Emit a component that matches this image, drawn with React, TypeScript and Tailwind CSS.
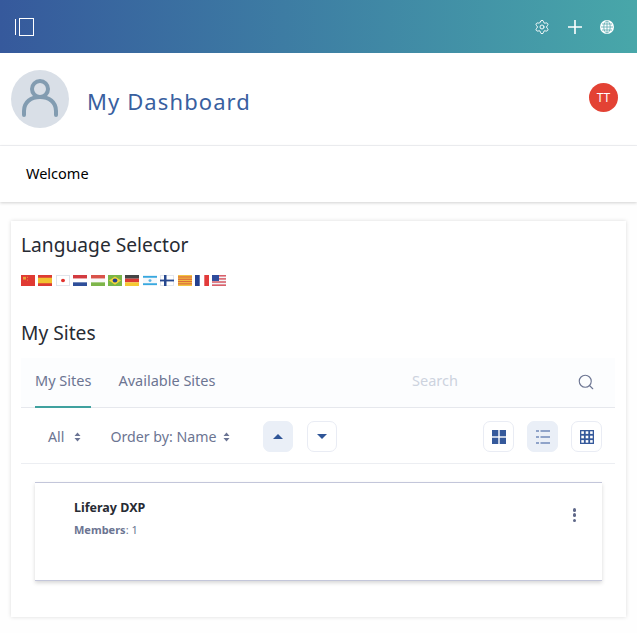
import React from "react";
import { Settings, Search } from "lucide-react";

const Flag = ({ children }: { children: React.ReactNode }) => (
  <svg width="14" height="11" viewBox="0 0 14 12" preserveAspectRatio="none" className="block shrink-0">
    {children}
  </svg>
);

const flags = [
  <><rect width="14" height="12" fill="#e03a33" /><rect x="2" y="2" width="3" height="3" fill="#e8a33a" /><rect x="6" y="2" width="1" height="1" fill="#e8a33a" /><rect x="6" y="5" width="1" height="1" fill="#e8a33a" /></>,
  <><rect width="14" height="12" fill="#dd3b33" /><rect y="3" width="14" height="6" fill="#f2c230" /></>,
  <><rect width="14" height="12" fill="#f4f5f8" /><rect x="0.5" y="0.5" width="13" height="11" fill="#fff" stroke="#dfe3ea" /><circle cx="7" cy="6" r="2" fill="#e2322e" /></>,
  <><rect width="14" height="4" fill="#d33b3f" /><rect y="4" width="14" height="4" fill="#fff" /><rect y="8" width="14" height="4" fill="#2f4f9a" /></>,
  <><rect width="14" height="4" fill="#d9534a" /><rect y="4" width="14" height="4" fill="#f8f8f8" /><rect y="8" width="14" height="4" fill="#7db54a" /></>,
  <><rect width="14" height="12" fill="#7ab648" /><path d="M7 1.500 13 6 7 10.500 1 6Z" fill="#f5d33a" /><circle cx="7" cy="6" r="2.300" fill="#23408f" /></>,
  <><rect width="14" height="4" fill="#444" /><rect y="4" width="14" height="4" fill="#dc3a33" /><rect y="8" width="14" height="4" fill="#f5c932" /></>,
  <><rect width="14" height="12" fill="#f6f8fb" /><rect y="1" width="14" height="2" fill="#38a8df" /><rect y="9" width="14" height="2" fill="#38a8df" /><circle cx="7" cy="6" r="1.500" fill="#5ab4e2" /></>,
  <><rect width="14" height="12" fill="#f0f2f7" /><rect x=".5" y=".5" width="13" height="11" fill="#fff" stroke="#e2e6ee" /><rect x="4" width="2.500" height="12" fill="#27488f" /><rect y="5" width="14" height="2" fill="#27488f" /></>,
  <><rect width="14" height="12" fill="#f3c442" /><rect y="1.500" width="14" height="1.300" fill="#dc6a3c" /><rect y="4" width="14" height="1.300" fill="#dc6a3c" /><rect y="6.500" width="14" height="1.300" fill="#dc6a3c" /><rect y="9" width="14" height="1.300" fill="#dc6a3c" /></>,
  <><rect width="14" height="12" fill="#fff" /><rect width="4.700" height="12" fill="#23408f" /><rect x="9.300" width="4.700" height="12" fill="#e23b3b" /></>,
  <><rect width="14" height="12" fill="#f3f4f7" /><rect y="0" width="14" height="1.700" fill="#d9606a" /><rect y="3.400" width="14" height="1.700" fill="#d9606a" /><rect y="6.800" width="14" height="1.700" fill="#d9606a" /><rect y="10.200" width="14" height="1.800" fill="#d9606a" /><rect width="7" height="6.500" fill="#2f4c9c" /></>,
];

const Updown = () => (
  <svg width="7" height="10" viewBox="0 0 7 10" className="block">
    <path d="M3.500 0.500 6.500 4H.5Z M3.500 9.500 .5 6h6Z" fill="#6b7494" />
  </svg>
);

const IconBtn = ({ active, children, wide }: { active?: boolean; children: React.ReactNode; wide?: boolean }) => (
  <div className={`flex h-[31px] ${wide ? "w-[31px]" : "w-[30px]"} items-center justify-center rounded-[7px] border ${active ? "border-[#eaeff7] bg-[#eaeff7]" : "border-[#e9ecf4] bg-white"}`}>
    {children}
  </div>
);

const Cell = ({ x, y }: { x: number; y: number }) => <rect x={x} y={y} width="2.600" height="2.600" fill="#fff" />;

export default function App() {
  return (
    <div className="h-[633px] w-[637px] overflow-hidden bg-[#fefefe] font-['Noto_Sans','Open_Sans',sans-serif]">
      <header className="flex h-[53px] items-center bg-gradient-to-r from-[#36599c] to-[#48a7a9] pl-[15px] pr-[23px] text-white">
        <svg width="19" height="18" viewBox="0 0 19 18" fill="none" stroke="#fff" strokeWidth="1">
          <path d="M.5 1v16" />
          <rect x="4.500" y=".5" width="14" height="17" />
        </svg>
        <div className="ml-auto flex items-center gap-[18px]">
          <Settings size={16} strokeWidth={1.400} />
          <svg width="14" height="14" viewBox="0 0 14 14" stroke="#fff" strokeWidth="1.600" fill="none">
            <path d="M0 7h14M7 0v14" />
          </svg>
          <svg width="14" height="14" viewBox="0 0 14 14" fill="none">
            <circle cx="7" cy="7" r="7" fill="#fff" />
            <ellipse cx="7" cy="7" rx="3.200" ry="6" stroke="#5aa9b0" strokeWidth=".8" />
            <path d="M1 7h12M7 1v12M2 4h10M2 10h10" stroke="#5aa9b0" strokeWidth=".8" />
          </svg>
        </div>
      </header>

      <div className="flex h-[93px] items-center border-b border-[#f1f2f5] bg-white pl-[11px] pr-[19px]">
        <div className="flex h-[58px] w-[58px] items-center justify-center rounded-full bg-[#d9dfe7]">
          <svg width="36" height="40" viewBox="0 0 36 40" fill="none" stroke="#829cb1" strokeWidth="4" strokeLinecap="round">
            <circle cx="18" cy="10" r="8" />
            <path d="M2 36v-4c0-9 7-14 16-14s16 5 16 14v4" />
          </svg>
        </div>
        <h1 className="ml-[18px] mt-[5px] text-[22px] tracking-[1.100px] text-[#39609f]">My Dashboard</h1>
        <div className="ml-auto mb-[3px] flex h-[29px] w-[29px] items-center justify-center rounded-full bg-[#e34234] text-[12px] text-white">TT</div>
      </div>

      <nav className="flex h-[56px] items-center bg-white pl-[26px] text-[14.500px] text-black shadow-[0_1px_3px_rgba(0,0,0,0.18)]">Welcome</nav>

      <main className="mx-[11px] mt-[19px] h-[396px] bg-white pl-[10px] pr-[11px] pt-[11px] shadow-[0_0_4px_rgba(0,0,0,0.14)]">
        <h2 className="text-[19.200px] leading-[26px] text-[#272b33]">Language Selector</h2>
        <div className="mt-[17px] flex gap-[3.400px]">
          {flags.map((f, i) => (
            <Flag key={i}>{f}</Flag>
          ))}
        </div>
        <h2 className="mt-[34px] text-[19.200px] leading-[26px] text-[#272b33]">My Sites</h2>

        <div className="mt-[12px] flex h-[50px] items-stretch border-b border-[#e6e8ed] bg-[#fcfdfe] pl-[14px] pr-[20px] text-[14.500px] text-[#6c7592]">
          <div className="flex items-center border-b-2 border-[#3fa19f] -mb-px pb-[3px]">My Sites</div>
          <div className="ml-[27px] flex items-center pb-[3px]">Available Sites</div>
          <div className="ml-auto flex w-[183px] items-center justify-between pb-[4px]">
            <span className="text-[#cdd3de]">Search</span>
            <Search size={18} strokeWidth={1.500} className="mt-[3px] text-[#6c7592]" />
          </div>
        </div>

        <div className="flex h-[56px] items-center border-b border-[#eceef2] pl-[27px] pr-[13px] pt-[2px] text-[14.200px] text-[#6c7592]">
          <span>All</span>
          <span className="ml-[10px]"><Updown /></span>
          <span className="ml-[29px]">Order by: Name</span>
          <span className="ml-[6px]"><Updown /></span>
          <div className="ml-[33px] flex gap-[14px]">
            <IconBtn active>
              <svg width="10" height="5" viewBox="0 0 10 5"><path d="M5 0 10 5H0Z" fill="#2f5597" /></svg>
            </IconBtn>
            <IconBtn>
              <svg width="10" height="5" viewBox="0 0 10 5"><path d="M0 0H10L5 5Z" fill="#2f5597" /></svg>
            </IconBtn>
          </div>
          <div className="ml-auto flex gap-[13px]">
            <IconBtn wide>
              <svg width="14" height="14" viewBox="0 0 14 14" fill="#35599b">
                <rect width="6.300" height="6.300" /><rect x="7.700" width="6.300" height="6.300" /><rect y="7.700" width="6.300" height="6.300" /><rect x="7.700" y="7.700" width="6.300" height="6.300" />
              </svg>
            </IconBtn>
            <IconBtn active wide>
              <svg width="14" height="14" viewBox="0 0 14 14" fill="#35599b">
                <rect y="0.500" width="3" height="1" /><rect x="4.500" y="0.500" width="9.500" height="1" />
                <rect y="6.500" width="3" height="1" /><rect x="4.500" y="6.500" width="9.500" height="1" />
                <rect y="12.500" width="3" height="1" /><rect x="4.500" y="12.500" width="9.500" height="1" />
              </svg>
            </IconBtn>
            <IconBtn wide>
              <svg width="14" height="14" viewBox="0 0 14 14">
                <rect width="14" height="14" fill="#35599b" />
                {[1.300, 5.700, 10.100].map((x) =>
                  [1.300, 5.700, 10.100].map((y) => <Cell key={`${x}-${y}`} x={x} y={y} />)
                )}
              </svg>
            </IconBtn>
          </div>
        </div>

        <div className="ml-[14px] mr-[13px] mt-[18px] flex h-[99px] items-start justify-between border-y border-[#c3c6da] bg-white pl-[39px] pr-[26px] pt-[15px] shadow-[0_2px_4px_rgba(0,0,0,0.16)]">
          <div>
            <div className="text-[12.500px] font-bold leading-[20px] text-[#272b33]">Liferay DXP</div>
            <div className="mt-[4px] text-[11px] leading-[16px] text-[#6c7592]"><b>Members</b>: 1</div>
          </div>
          <div className="mt-[10px] flex flex-col gap-[1.800px]">
            <i className="block h-[3.500px] w-[3.500px] rounded-full bg-[#5f6889]" />
            <i className="block h-[3.500px] w-[3.500px] rounded-full bg-[#5f6889]" />
            <i className="block h-[3.500px] w-[3.500px] rounded-full bg-[#5f6889]" />
          </div>
        </div>
      </main>
    </div>
  );
}
